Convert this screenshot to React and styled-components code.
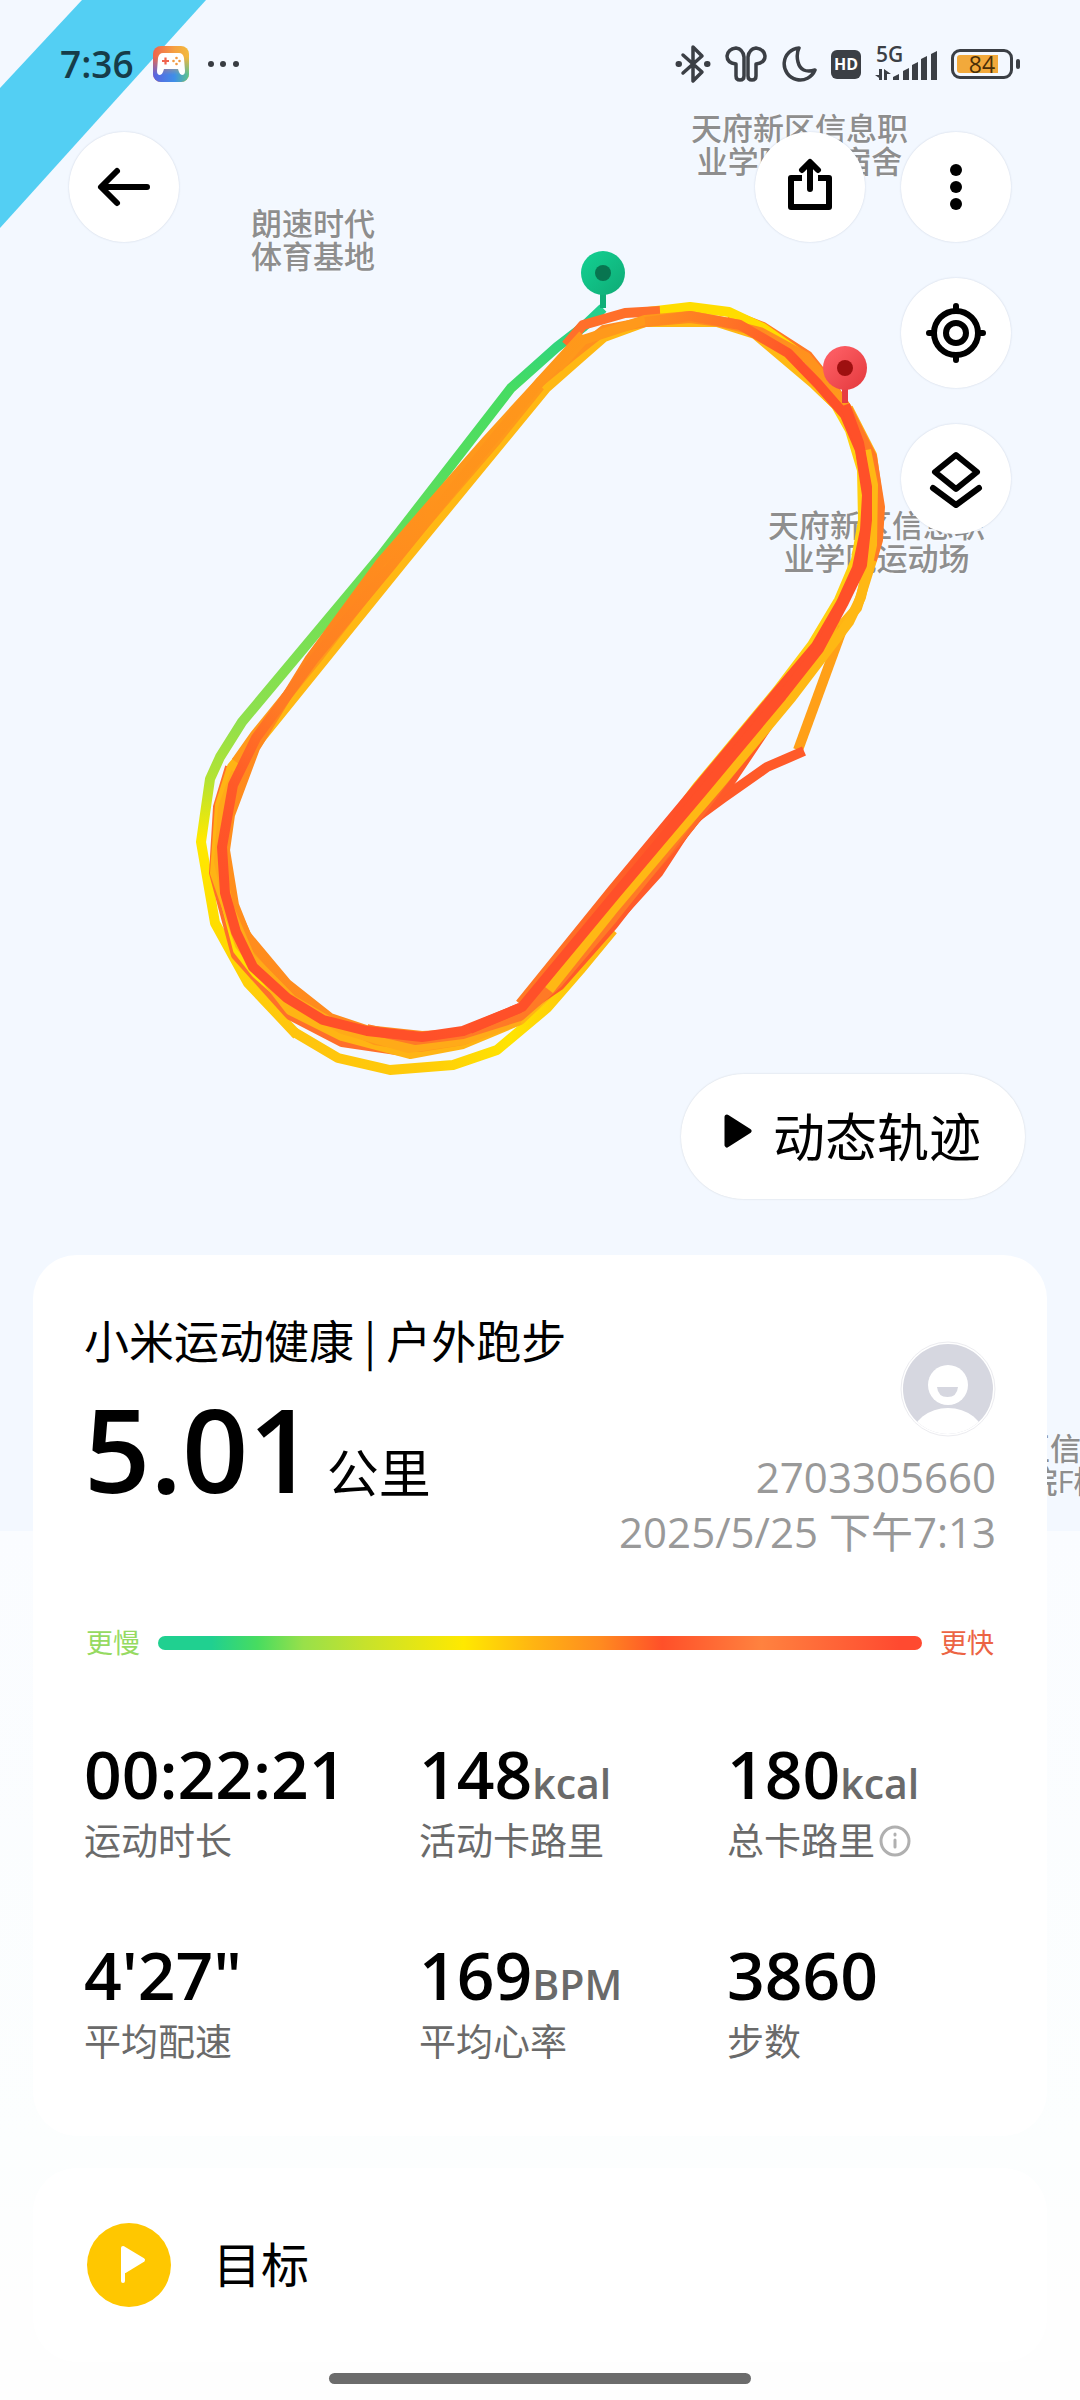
import styled, { createGlobalStyle } from "styled-components";

const laps = [
    { color: "url(#slowStart)", points: "603,308 583,327 557,347 511,388 380,557 242,722 220,757 210,779 201,842 215,923 248,983 297,1035" },
    { color: "url(#slowBend)", points: "294,1032 338,1058 390,1070 453,1065 497,1050 547,1008 580,970 613,930" },
    { color: "#ff6f2a", points: "230,767 218,807 214,873 236,955 290,1015 342,1042 410,1052 463,1042" },
    { color: "#ffe000", points: "232,767 221,820 220,880 238,950 256,973 290,1003" },
    { color: "#ffd010", points: "547,984 613,900 697,787 777,691 812,645 839,600 856,560 863,520 862,470 850,430 836,405 814,384" },
    { color: "#ffb814", points: "836,405 814,384 755,334 717,322 645,322 604,337 580,358 546,388 404,561 261,738 242,765" },
    { color: "#ffb414", points: "253,742 232,767 220,805 215,873 240,945 290,1010 342,1036 410,1054 463,1044 520,1020 553,989 617,917 690,823 740,755 812,660 834,634 857,608 872,560 879,507 872,455 848,408" },
    { color: "#ffa018", points: "843,627 798,750" },
    { color: "#ff5a29", points: "804,751 767,767 723,798 697,817 613,925 560,985 520,1012" },
    { color: "#ff5a29", points: "822,640 807,670 783,703 728,785 688,827 658,873 610,926 588,952" },
    { color: "#ff6a29", points: "776,706 733,768 690,826 650,872 605,922 556,978 525,1010" },
    { color: "#ff7a26", points: "872,560 878,540 880,507 872,457 848,410 832,386 808,356 763,327 729,314" },
    { color: "#ffdd00", points: "648,312 690,307 729,312 763,328 808,360" },
    { color: "#ff991b", points: "224,860 232,905 250,943 290,990 335,1022 375,1040 420,1047 463,1040 515,1020 555,985" },
    { color: "#ff991b", points: "540,386 495,442 392,562 320,655 255,735 236,762" },
    { color: "url(#midLap)", points: "848,410 830,385 806,357 760,332 720,322 690,318 645,322 604,330 575,353 540,382 487,440 381,562 309,660 255,748 230,815 225,850 234,905 246,935 287,984 330,1018 366,1030 422,1036 463,1034 520,1014 555,980 617,912" },
    { color: "#ffaa18", points: "236,772 223,808 219,862 229,908 250,957 292,1000 342,1029 408,1048 463,1040 520,1020" },
    { color: "#ff7a26", points: "367,1029 415,1040 463,1034 520,1016 558,983 613,918 665,853 700,806 740,753 776,706" },
    { color: "#ffb814", points: "549,990 615,907 669,843 719,785 792,697 824,655 849,622 861,597 872,545 873,485 866,450" },
    { color: "#ff6f2a", points: "566,345 583,325 625,313 660,311" },
    { color: "#ff991b", points: "558,368 583,340 645,320 690,316 740,325" },
    { color: "url(#fastLap)", points: "520,1008 463,1031 422,1037 367,1031 323,1020 287,998 253,967 236,932 225,893 222,847 233,785 256,738 314,659 390,567 465,474 540,382 583,335" },
    { color: "url(#lastBend)", points: "645,322 690,316 740,325 788,353 818,384 845,415 860,450 867,495 865,530 857,568 841,603 816,646 778,691 698,787 613,889 520,1004" },
    { color: "#ff5029", points: "845,405 859,443 867,487 867,520 862,565 843,604 819,649 782,696 702,792 615,895 522,1007 470,1029" },
]

const signalBars = [
    { x: 18, h: 6 },
    { x: 28, h: 12 },
    { x: 37, h: 18 },
    { x: 46, h: 24 },
    { x: 56, h: 29 },
]

const stats = [
    { value: "00:22:21", label: "运动时长" },
    { value: "148", unit: "kcal", label: "活动卡路里" },
    { value: "180", unit: "kcal", label: "总卡路里", info: true },
    { value: "4'27\"", label: "平均配速" },
    { value: "169", unit: "BPM", label: "平均心率" },
    { value: "3860", label: "步数" },
]

function Pin({ x, y, light, main, dark }) {
    return (
        <g transform={`translate(${x} ${y})`}>
            <path d="M0 18V35" stroke={main} strokeWidth="6" />
            <circle r="22" fill={`url(#pin${x})`} />
            <circle r="8" fill={dark} />
            <defs>
                <linearGradient id={`pin${x}`} x1="0" y1="0" x2="1" y2="1">
                    <stop offset="0.2" stopColor={light} />
                    <stop offset="0.9" stopColor={main} />
                </linearGradient>
            </defs>
        </g>
    )
}

function RouteMap() {
    return (
        <Map>
            <MapLabel $left={251} $top={207}>朗速时代<br />体育基地</MapLabel>
            <MapLabel $left={691} $top={112}>天府新区信息职<br />业学院A区宿舍</MapLabel>
            <MapLabel $left={768} $top={509}>天府新区信息职<br />业学院运动场</MapLabel>
            <MapLabel $left={926} $top={1432}>天府新区信息职<br />业学院F栋</MapLabel>
            <Route viewBox="0 0 1080 1531" aria-hidden="true">
                <defs>
                    <linearGradient id="slowStart" gradientUnits="userSpaceOnUse" x1="0" y1="308" x2="0" y2="1035">
                        <stop offset="0" stopColor="#22cf90" />
                        <stop offset="0.11" stopColor="#46dc62" />
                        <stop offset="0.35" stopColor="#66df5a" />
                        <stop offset="0.57" stopColor="#90e04c" />
                        <stop offset="0.65" stopColor="#b4e332" />
                        <stop offset="0.73" stopColor="#ffe900" />
                        <stop offset="0.85" stopColor="#ffdd00" />
                        <stop offset="1" stopColor="#ffc40e" />
                    </linearGradient>
                    <linearGradient id="slowBend" gradientUnits="userSpaceOnUse" x1="294" y1="0" x2="613" y2="0">
                        <stop offset="0" stopColor="#ffc40e" />
                        <stop offset="0.4" stopColor="#ffcb0a" />
                        <stop offset="0.68" stopColor="#ffe400" />
                        <stop offset="1" stopColor="#ffb414" />
                    </linearGradient>
                    <linearGradient id="midLap" gradientUnits="userSpaceOnUse" x1="0" y1="310" x2="0" y2="1040">
                        <stop offset="0" stopColor="#ff8a20" />
                        <stop offset="0.15" stopColor="#ff9c1a" />
                        <stop offset="0.45" stopColor="#ff8420" />
                        <stop offset="0.75" stopColor="#ff8f1c" />
                        <stop offset="1" stopColor="#ff8a1e" />
                    </linearGradient>
                    <linearGradient id="fastLap" gradientUnits="userSpaceOnUse" x1="222" y1="880" x2="640" y2="330">
                        <stop offset="0" stopColor="#ff5029" />
                        <stop offset="0.12" stopColor="#ff5a28" />
                        <stop offset="0.25" stopColor="#ff7a24" />
                        <stop offset="0.6" stopColor="#ff921c" />
                        <stop offset="1" stopColor="#ff9a1a" />
                    </linearGradient>
                    <linearGradient id="lastBend" gradientUnits="userSpaceOnUse" x1="645" y1="322" x2="800" y2="365">
                        <stop offset="0" stopColor="#ff8f1e" />
                        <stop offset="0.5" stopColor="#ff7426" />
                        <stop offset="1" stopColor="#ff5029" />
                    </linearGradient>
                </defs>
                <polygon points="82,0 206,0 0,228 0,88" fill="#53cff3" />
                {laps.map((lap, index) => (
                    <polyline
                        key={index}
                        points={lap.points}
                        fill="none"
                        stroke={lap.color}
                        strokeWidth="10"
                        strokeLinejoin="round"
                    />
                ))}
                <Pin x={603} y={273} light="#12ca8d" main="#0fae78" dark="#087550" />
                <Pin x={845} y={368} light="#fb5b61" main="#e63d41" dark="#9e1010" />
            </Route>
        </Map>
    )
}

function StatusBar() {
    return (
        <StatusRow>
            <StatusGroup $gap={19}>
                <Clock>7:36</Clock>
                <svg width="36" height="36" viewBox="0 0 36 36" aria-hidden="true">
                    <defs>
                        <linearGradient id="padTop" x1="0" y1="0" x2="1" y2="0">
                            <stop offset="0" stopColor="#f0634d" />
                            <stop offset="0.6" stopColor="#f5a142" />
                            <stop offset="1" stopColor="#f2bb3e" />
                        </linearGradient>
                        <linearGradient id="padBottom" x1="0" y1="0" x2="1" y2="0">
                            <stop offset="0" stopColor="#5b63e0" />
                            <stop offset="0.6" stopColor="#3f8fe8" />
                            <stop offset="1" stopColor="#5cc58a" />
                        </linearGradient>
                        <linearGradient id="padFade" x1="0" y1="0" x2="0" y2="1">
                            <stop offset="0.3" stopColor="#fff" stopOpacity="0" />
                            <stop offset="0.8" stopColor="#fff" />
                        </linearGradient>
                        <mask id="padMask"><rect width="36" height="36" fill="url(#padFade)" /></mask>
                    </defs>
                    <rect width="36" height="36" rx="8" fill="url(#padTop)" />
                    <rect width="36" height="36" rx="8" fill="url(#padBottom)" mask="url(#padMask)" />
                    <path d="M10 7H26Q30 7 31 12L32 25Q32 29 29 29Q27 29 26 26L25 23H11L10 26Q9 29 7 29Q4 29 4 25L5 12Q6 7 10 7Z" fill="#fff" />
                    <path d="M9 15H16M12.500 11.500V18.500" stroke="#f0634d" strokeWidth="2.200" />
                    <g fill="#f09a42">
                        <circle cx="23.500" cy="12" r="1.300" />
                        <circle cx="23.500" cy="18" r="1.300" />
                        <circle cx="20.500" cy="15" r="1.300" />
                        <circle cx="26.500" cy="15" r="1.300" />
                    </g>
                </svg>
                <svg width="32" height="8" viewBox="0 0 32 8" fill="#383c42" aria-hidden="true">
                    <circle cx="3" cy="4" r="3" />
                    <circle cx="15" cy="4" r="3" />
                    <circle cx="28" cy="4" r="3" />
                </svg>
            </StatusGroup>

            <StatusGroup $gap={14}>
                <svg width="36" height="40" viewBox="0 0 36 40" fill="none" stroke="#3b3f45" strokeWidth="3.500" strokeLinejoin="round" strokeLinecap="round" aria-hidden="true">
                    <path d="M8 11L27 28L18 37V3L27 12L8 29" />
                    <path d="M3.500 20H4M32 20H32.500" strokeWidth="6" />
                </svg>
                <svg width="42" height="36" viewBox="0 0 42 36" fill="none" stroke="#3b3f45" strokeWidth="3.500" strokeLinejoin="round" aria-hidden="true">
                    <path d="M11 18Q2 17 2 10Q3 3 11 2Q18 3 19 11V30Q19 34 15 34Q11 34 11 30Z" />
                    <path d="M31 18Q40 17 40 10Q39 3 31 2Q24 3 23 11V30Q23 34 27 34Q31 34 31 30Z" />
                </svg>
                <svg width="36" height="36" viewBox="0 0 36 36" fill="none" stroke="#3b3f45" strokeWidth="3.500" strokeLinejoin="round" aria-hidden="true">
                    <path d="M18 2A16 16 0 1 0 34 24Q20 28 17 16Q15 8 18 2Z" />
                </svg>
                <HdBadge>HD</HdBadge>
                <SignalIcon width="62" height="36" viewBox="0 0 62 36" fill="#3b3f45" aria-hidden="true">
                    <SignalText x="1" y="16">5G</SignalText>
                    <path d="M4 23V34H7V23ZM0 29L7 34V29ZM9 34V23L16 28H12V34Z" />
                    {signalBars.map((bar) => (
                        <path key={bar.x} d={`M${bar.x} 34V${37 - bar.h}L${bar.x + 6} ${34 - bar.h}V34Z`} />
                    ))}
                </SignalIcon>
                <BatteryWrap>
                    <Battery>84</Battery>
                    <BatteryTip />
                </BatteryWrap>
            </StatusGroup>
        </StatusRow>
    )
}

function App() {
    return (
        <Page>
            <GlobalStyle />
            <RouteMap />

            <Stage>
                <StatusBar />
                <Toolbar>
                    <RoundButton aria-label="返回">
                        <svg width="56" height="44" viewBox="0 0 56 44" fill="none" stroke="#000" strokeWidth="6" strokeLinecap="round" strokeLinejoin="round">
                            <path d="M51 22H6M21 6L5 22L21 38" />
                        </svg>
                    </RoundButton>
                    <ToolbarRight>
                        <RoundButton aria-label="分享">
                            <svg width="48" height="58" viewBox="0 0 48 58" fill="none" stroke="#000" strokeWidth="6">
                                <path d="M16 20H5V49H43V20H32" strokeLinejoin="round" />
                                <path d="M24 31V5M16 12L24 4L32 12" strokeLinecap="round" strokeLinejoin="round" />
                            </svg>
                        </RoundButton>
                        <RoundButton aria-label="更多">
                            <svg width="12" height="48" viewBox="0 0 12 48">
                                <circle cx="6" cy="7" r="6" />
                                <circle cx="6" cy="24" r="6" />
                                <circle cx="6" cy="41" r="6" />
                            </svg>
                        </RoundButton>
                    </ToolbarRight>
                </Toolbar>
                <SideTools>
                    <RoundButton aria-label="定位">
                        <svg width="62" height="62" viewBox="0 0 62 62" fill="none" stroke="#000" strokeWidth="6">
                            <circle cx="31" cy="31" r="22" />
                            <circle cx="31" cy="31" r="10" />
                            <path d="M31 4V9M31 53V58M4 31H9M53 31H58" strokeLinecap="round" />
                        </svg>
                    </RoundButton>
                    <RoundButton aria-label="图层">
                        <svg width="56" height="60" viewBox="0 0 56 60" fill="none" stroke="#000" strokeWidth="6" strokeLinejoin="round" strokeLinecap="round">
                            <path d="M28 6L49 23L28 40L7 23Z" />
                            <path d="M5 39L28 56L51 39" />
                        </svg>
                    </RoundButton>
                </SideTools>
                <PlayButton>
                    <svg width="30" height="36" viewBox="0 0 30 36" aria-hidden="true">
                        <path d="M4 4L26 18L4 32Z" stroke="#000" strokeWidth="5" strokeLinejoin="round" />
                    </svg>
                    动态轨迹
                </PlayButton>
            </Stage>

            <Card>
                <Summary>
                    <div>
                        <Title>小米运动健康 | 户外跑步</Title>
                        <Distance>5.01<DistanceUnit>公里</DistanceUnit></Distance>
                    </div>
                    <Owner>
                        <svg width="96" height="96" viewBox="0 0 96 96" aria-hidden="true">
                            <clipPath id="avatarClip"><circle cx="48" cy="48" r="45" /></clipPath>
                            <circle cx="48" cy="48" r="47" fill="#fff" stroke="#ececf0" />
                            <g clipPath="url(#avatarClip)">
                                <rect width="96" height="96" fill="#d6d7e0" />
                                <circle cx="48" cy="44" r="20" fill="#fff" />
                                <path d="M37 46H58Q57 56 47.500 56Q38 56 37 46Z" fill="#d6d7e0" />
                                <ellipse cx="48" cy="96" rx="36" ry="29" fill="#fff" />
                            </g>
                        </svg>
                        <OwnerText>2703305660</OwnerText>
                        <OwnerText>2025/5/25 下午7:13</OwnerText>
                    </Owner>
                </Summary>

                <Legend>
                    <LegendText $color="#96da62">更慢</LegendText>
                    <PaceBar />
                    <LegendText $color="#ec6444">更快</LegendText>
                </Legend>

                <StatGrid>
                    {stats.map((stat) => (
                        <Stat key={stat.label}>
                            <StatValue>{stat.value}{stat.unit && <StatUnit>{stat.unit}</StatUnit>}</StatValue>
                            <StatLabel>
                                {stat.label}
                                {stat.info && (
                                    <svg width="32" height="32" viewBox="0 0 32 32" fill="none" stroke="#b0b0b0" aria-hidden="true">
                                        <circle cx="16" cy="16" r="14" strokeWidth="3" />
                                        <path d="M16 15V22M16 9V10" strokeWidth="3" strokeLinecap="round" />
                                    </svg>
                                )}
                            </StatLabel>
                        </Stat>
                    ))}
                </StatGrid>
            </Card>

            <GoalCard>
                <svg width="84" height="84" viewBox="0 0 84 84" aria-hidden="true">
                    <circle cx="42" cy="42" r="42" fill="#ffc700" />
                    <path d="M36 58V25L56 37L38 48" fill="#fff" stroke="#fff" strokeWidth="4" strokeLinejoin="round" strokeLinecap="round" />
                </svg>
                <GoalTitle>目标</GoalTitle>
            </GoalCard>
            <HomeBar />
        </Page>
    )
}

export default App


const GlobalStyle = createGlobalStyle`
    * {
        box-sizing: border-box;
    }
    body {
        margin: 0;
        font-family: "Open Sans", "Noto Sans CJK SC", sans-serif;
        color: #000;
    }
    h1, h2, p {
        margin: 0;
        font-weight: 400;
    }
    svg {
        display: block;
        flex-shrink: 0;
    }
    button {
        padding: 0;
        border: none;
        font-family: inherit;
        color: inherit;
    }
`
const Page = styled.div`
    position: relative;
    display: flex;
    flex-direction: column;
    min-height: 100vh;
    overflow: hidden;
    background: linear-gradient(#fafcff 1531px, #fcfefe 2140px, #fefefe 2300px);
`
const Map = styled.div`
    position: absolute;
    top: 0;
    left: 0;
    right: 0;
    height: 1531px;
    overflow: hidden;
    background: #f3f8ff;
`
const MapLabel = styled.p`
    position: absolute;
    left: ${props => props.$left}px;
    top: ${props => props.$top}px;
    font-size: 31px;
    line-height: 33px;
    font-weight: 500;
    text-align: center;
    white-space: nowrap;
    color: #8e8e8e;
    text-shadow: 0 0 3px #fff;
`
const Route = styled.svg`
    position: absolute;
    top: 0;
    left: 0;
    width: 100%;
`
const Stage = styled.section`
    position: relative;
    display: flex;
    flex-direction: column;
    min-height: 1255px;
    padding-bottom: 56px;
`
const StatusRow = styled.header`
    display: flex;
    justify-content: space-between;
    align-items: center;
    height: 128px;
    padding: 0 60px;
`
const StatusGroup = styled.div`
    display: flex;
    align-items: center;
    gap: ${props => props.$gap}px;
`
const Clock = styled.span`
    font-size: 37px;
    line-height: 48px;
    font-weight: 600;
    color: #163c49;
`
const HdBadge = styled.span`
    width: 30px;
    border-radius: 6px;
    background: #3b3f45;
    color: #fff;
    font-size: 16px;
    line-height: 29px;
    font-weight: 700;
    text-align: center;
`
const SignalIcon = styled.svg`
    overflow: visible;
`
const SignalText = styled.text`
    font-size: 21px;
    font-weight: 600;
`
const BatteryWrap = styled.div`
    display: flex;
    align-items: center;
    gap: 3px;
`
const Battery = styled.span`
    width: 62px;
    height: 30px;
    border: 3px solid #3b3f45;
    border-radius: 9px;
    background: linear-gradient(to right, #f2a93b 41px, transparent 41px) no-repeat content-box;
    padding: 3px;
    font-size: 23px;
    line-height: 18px;
    font-weight: 500;
    text-align: center;
    color: #4a2f08;
`
const BatteryTip = styled.span`
    width: 4px;
    height: 10px;
    border-radius: 2px;
    background: #3b3f45;
`
const Toolbar = styled.nav`
    display: flex;
    justify-content: space-between;
    padding: 4px 69px 0;
`
const ToolbarRight = styled.div`
    display: flex;
    gap: 36px;
`
const RoundButton = styled.button`
    display: flex;
    align-items: center;
    justify-content: center;
    width: 110px;
    height: 110px;
    border-radius: 50%;
    background: #fff;
    box-shadow: 0 0 2px rgba(40, 60, 100, 0.2);
`
const SideTools = styled.div`
    display: flex;
    flex-direction: column;
    align-items: flex-end;
    gap: 36px;
    padding: 36px 69px 0;
`
const PlayButton = styled.button`
    display: flex;
    align-items: center;
    align-self: flex-end;
    gap: 20px;
    height: 125px;
    margin: auto 55px 0 0;
    padding: 0 44px 0 42px;
    border-radius: 63px;
    background: #fff;
    box-shadow: 0 0 2px rgba(0, 0, 0, 0.15);
    font-size: 52px;
    line-height: 60px;

    svg {
        margin-bottom: 12px;
    }
`
const Card = styled.section`
    position: relative;
    margin: 0 33px;
    padding: 55px 51px 72px;
    border-radius: 44px;
    background: #fff;
`
const Summary = styled.div`
    display: flex;
    justify-content: space-between;
`
const Title = styled.h1`
    font-family: "Noto Sans CJK SC", sans-serif;
    font-size: 45px;
    line-height: 60px;
`
const Distance = styled.p`
    display: flex;
    align-items: baseline;
    gap: 12px;
    font-size: 116px;
    line-height: 156px;
    font-weight: 600;
`
const DistanceUnit = styled.span`
    font-size: 52px;
    font-weight: 400;
`
const Owner = styled.div`
    display: flex;
    flex-direction: column;
    align-items: flex-end;
    padding-top: 31px;

    svg {
        margin-bottom: 12px;
    }
`
const OwnerText = styled.p`
    font-size: 42px;
    line-height: 55px;
    color: #999;
`
const Legend = styled.div`
    display: flex;
    align-items: center;
    gap: 18px;
    margin-top: 69px;
    padding: 0 2px;
`
const LegendText = styled.span`
    font-size: 27px;
    line-height: 30px;
    color: ${props => props.$color};
`
const PaceBar = styled.div`
    flex: 1;
    height: 14px;
    border-radius: 7px;
    background: linear-gradient(
        to right,
        #20d090 7%,
        #47dc60 13%,
        #98e04a 19%,
        #c6e22c 27%,
        #ffe900 40%,
        #ffb512 49%,
        #ff8a20 58%,
        #ff5029 66%,
        #ff823f 79%,
        #ff4a30 97%
    );
`
const StatGrid = styled.div`
    display: grid;
    grid-template-columns: 335fr 308fr 269fr;
    row-gap: 75px;
    margin-top: 79px;
`
const Stat = styled.div`
    display: flex;
    flex-direction: column;
    gap: 10px;
`
const StatValue = styled.p`
    font-size: 66px;
    line-height: 72px;
    font-weight: 600;
    white-space: nowrap;
`
const StatUnit = styled.span`
    font-size: 41px;
    line-height: 41px;
    color: #6a6a6a;
`
const StatLabel = styled.p`
    display: flex;
    align-items: center;
    gap: 4px;
    font-size: 37px;
    line-height: 44px;
    color: #6a6a6a;
`
const GoalCard = styled.section`
    position: relative;
    display: flex;
    align-items: center;
    gap: 42px;
    margin: 32px 33px 0;
    padding: 55px 54px;
    border-radius: 44px;
    background: #fff;
`
const GoalTitle = styled.h2`
    font-size: 48px;
    line-height: 60px;
`
const HomeBar = styled.div`
    position: relative;
    align-self: center;
    width: 39%;
    height: 11px;
    margin: auto 0 16px;
    border-radius: 6px;
    background: #6b6b6b;
`
